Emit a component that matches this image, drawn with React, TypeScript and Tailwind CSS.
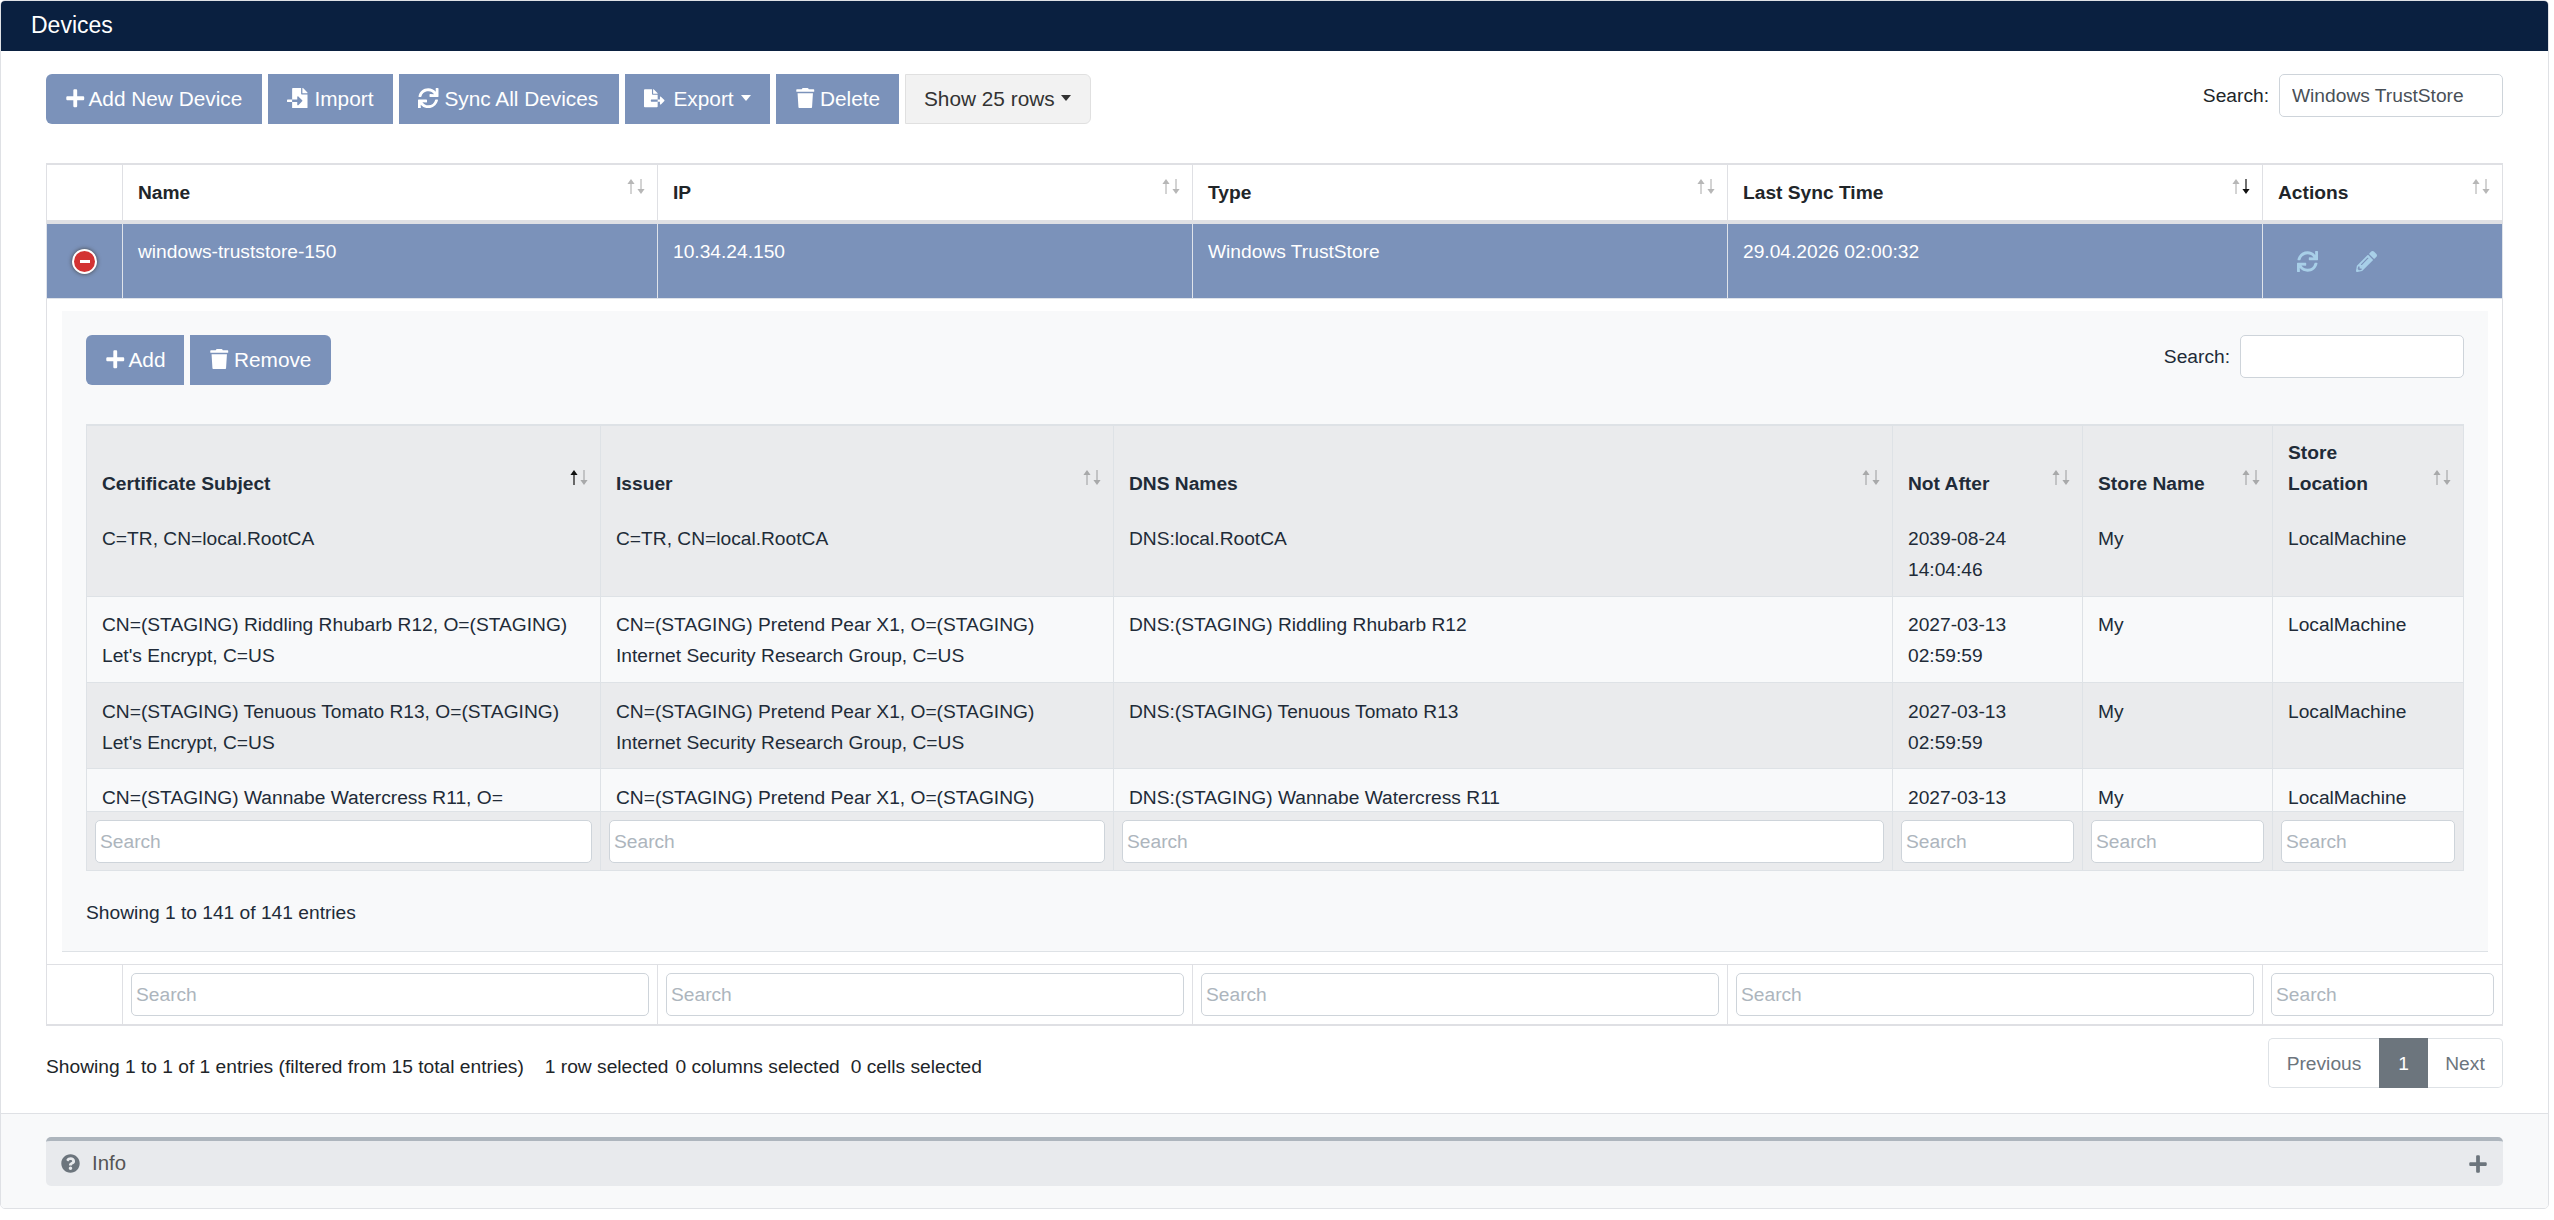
import {
  FaPlus,
  FaFileImport,
  FaFileExport,
  FaSync,
  FaTrash,
  FaPencilAlt,
  FaQuestionCircle,
} from 'react-icons/fa';

const outerCols = ['w-[77px]', 'w-[535px]', 'w-[535px]', 'w-[535px]', 'w-[535px]', 'w-[240px]'];
const innerCols = ['w-[515px]', 'w-[513px]', 'w-[779px]', 'w-[190px]', 'w-[190px]', 'w-[191px]'];

const certificates = [
  {
    subject: 'C=TR, CN=local.RootCA',
    issuer: 'C=TR, CN=local.RootCA',
    dns: 'DNS:local.RootCA',
    notAfter: '2039-08-24 14:04:46',
  },
  {
    subject: "CN=(STAGING) Riddling Rhubarb R12, O=(STAGING) Let's Encrypt, C=US",
    issuer: 'CN=(STAGING) Pretend Pear X1, O=(STAGING) Internet Security Research Group, C=US',
    dns: 'DNS:(STAGING) Riddling Rhubarb R12',
    notAfter: '2027-03-13 02:59:59',
  },
  {
    subject: "CN=(STAGING) Tenuous Tomato R13, O=(STAGING) Let's Encrypt, C=US",
    issuer: 'CN=(STAGING) Pretend Pear X1, O=(STAGING) Internet Security Research Group, C=US',
    dns: 'DNS:(STAGING) Tenuous Tomato R13',
    notAfter: '2027-03-13 02:59:59',
  },
  {
    subject: "CN=(STAGING) Wannabe Watercress R11, O=(STAGING) Let's Encrypt, C=US",
    issuer: 'CN=(STAGING) Pretend Pear X1, O=(STAGING) Internet Security Research Group, C=US',
    dns: 'DNS:(STAGING) Wannabe Watercress R11',
    notAfter: '2027-03-13 02:59:59',
  },
];

const Cols = ({ widths }: { widths: string[] }) => (
  <colgroup>
    {widths.map((w, i) => (
      <col key={i} className={w} />
    ))}
  </colgroup>
);

const SortArrow = ({ down, on }: { down?: boolean; on?: boolean }) => (
  <svg
    viewBox="0 0 8 15"
    className={`h-[15px] w-[8px] ${down ? 'rotate-180' : ''} ${on ? 'text-[#111]' : 'text-[#111]/30'}`}
    fill="currentColor"
  >
    <path d="M4 0 L7.6 5 H4.6 V15 H3.4 V5 H0.4 Z" />
  </svg>
);

// sort arrows sit on top of the header cell, like the DataTables ::before/::after ones
const SortIcon = ({ active, top }: { active?: 'up' | 'down'; top: string }) => (
  <span className={`absolute right-[12px] flex gap-[2px] ${top}`}>
    <SortArrow on={active === 'up'} />
    <SortArrow down on={active === 'down'} />
  </span>
);

const Caret = ({ className = '' }: { className?: string }) => (
  <span className={`border-x-[5.5px] border-t-[6px] border-x-transparent border-t-current ${className}`} />
);

const ToolButton = ({
  icon,
  label,
  className = '',
  caret,
}: {
  icon: React.ReactNode;
  label: string;
  className?: string;
  caret?: boolean;
}) => (
  <button
    className={`flex h-[50px] items-center bg-[#7b92ba] pb-[2px] pl-[19px] text-[20.8px] text-white ${className}`}
  >
    {icon}
    {label}
    {caret && <Caret className="-ml-[2px]" />}
  </button>
);

const SearchBox = ({ value }: { value?: string }) => (
  <div className="flex items-start gap-[10px] text-[19.2px] leading-[31px]">
    <span className="mt-[6px]">Search:</span>
    <input
      readOnly
      value={value ?? ''}
      className="h-[43px] w-[224px] rounded-[5px] border border-[#ced4da] bg-white px-[12px] pt-[1px] text-[19.2px] text-[#495057]"
    />
  </div>
);

const FilterInput = ({ className = '' }: { className?: string }) => (
  <input
    readOnly
    placeholder="Search"
    className={`block h-[43px] w-full rounded-[5px] border border-[#ced4da] bg-white px-[4px] pt-[1px] text-[19.2px] placeholder:text-[#adb5bd] ${className}`}
  />
);

const DetailPanel = () => (
  <div className="h-[641px] border-b border-[#dee2e6] bg-[#f8f9fa] px-[24px] pt-[24px] text-[#212b38]">
    <div className="flex items-start justify-between">
      <div className="flex gap-[6px]">
        <ToolButton
          icon={<FaPlus className="text-[20.5px]" />}
          label="Add"
          className="w-[98px] gap-[3px] rounded-l-[6px]"
        />
        <ToolButton
          icon={<FaTrash className="text-[20.5px]" />}
          label="Remove"
          className="w-[141px] gap-[4.5px] rounded-r-[6px]"
        />
      </div>
      <SearchBox />
    </div>

    <div className="mt-[39px] w-[2378px]">
      {/* Scroll head */}
      <table className="w-[2378px] table-fixed border-separate border-spacing-0">
        <Cols widths={innerCols} />
        <thead>
          <tr className="bg-[#eaebed] align-bottom">
            {['Certificate Subject', 'Issuer', 'DNS Names', 'Not After', 'Store Name', 'Store Location'].map(
              (title, i) => (
                <th
                  key={title}
                  className={`relative h-[87px] border-t-[2px] border-r border-[#dee2e6] px-[15px] pb-[12px] text-left font-bold ${
                    i === 0 ? 'border-l' : ''
                  } ${i === 5 ? 'pr-[48px]' : ''}`}
                >
                  {title}
                  <SortIcon active={i === 0 ? 'up' : undefined} top="top-[44px]" />
                </th>
              ),
            )}
          </tr>
        </thead>
      </table>

      {/* Scroll body */}
      <div className="h-[300px] overflow-hidden">
        <table className="w-[2378px] table-fixed border-separate border-spacing-0">
          <Cols widths={innerCols} />
          <tbody>
            {certificates.map((cert, i) => (
              <tr key={cert.dns} className={`align-top ${i % 2 === 0 ? 'bg-[#eaebed]' : 'bg-[#f8f9fa]'}`}>
                {[cert.subject, cert.issuer, cert.dns, cert.notAfter, 'My', 'LocalMachine'].map((value, j) => (
                  <td
                    key={j}
                    className={`h-[86px] border-r border-b border-[#dee2e6] px-[15px] ${i < 2 ? 'pt-[12px]' : 'pt-[13px]'} ${
                      j === 0 ? 'border-l' : ''
                    }`}
                  >
                    {value}
                  </td>
                ))}
              </tr>
            ))}
          </tbody>
        </table>
      </div>

      {/* Scroll foot */}
      <table className="w-[2378px] table-fixed border-separate border-spacing-0">
        <Cols widths={innerCols} />
        <tfoot>
          <tr className="bg-[#eaebed]">
            {innerCols.map((_, i) => (
              <td
                key={i}
                className={`h-[60px] border-t border-r border-b border-[#dee2e6] px-[8px] ${i === 0 ? 'border-l' : ''}`}
              >
                <FilterInput />
              </td>
            ))}
          </tr>
        </tfoot>
      </table>
    </div>

    <div className="mt-[26px]">Showing 1 to 141 of 141 entries</div>
  </div>
);

export default function App() {
  return (
    <div className="h-[1220px] w-[2554px] bg-white pr-[5px] font-['Liberation_Sans',Arial,sans-serif] text-[19.2px] leading-[31px] text-[#212529]">
      <div className="h-[1209px] overflow-hidden rounded-[5px] border border-[#dfe1e5]">
        <div className="flex h-[50px] items-center bg-[#0a2040] pb-[2px] pl-[30px] text-[23px] text-white">Devices</div>

        <div className="h-[1062px] px-[45px] pt-[23px]">
          {/* Toolbar */}
          <div className="flex items-start justify-between">
            <div className="flex gap-[6px]">
              <ToolButton
                icon={<FaPlus className="text-[20.5px]" />}
                label="Add New Device"
                className="w-[216px] gap-[3px] rounded-l-[6px]"
              />
              <ToolButton
                icon={<FaFileImport className="text-[20.5px]" />}
                label="Import"
                className="w-[125px] gap-[7px]"
              />
              <ToolButton
                icon={<FaSync className="text-[20.5px]" />}
                label="Sync All Devices"
                className="w-[220px] gap-[6px]"
              />
              <ToolButton
                icon={<FaFileExport className="text-[20.5px]" />}
                label="Export"
                caret
                className="w-[145px] gap-[9px]"
              />
              <ToolButton
                icon={<FaTrash className="text-[20.5px]" />}
                label="Delete"
                className="w-[123px] gap-[4.5px]"
              />
              <button className="flex h-[50px] w-[186px] items-center rounded-r-[6px] border border-[#e0e0e0] bg-[#f2f2f2] pb-[2px] pl-[18px] text-[20.8px] text-[#333]">
                Show 25 rows
                <Caret className="ml-[6px]" />
              </button>
            </div>
            <SearchBox value="Windows TrustStore" />
          </div>

          {/* Devices table */}
          <table className="mt-[39px] w-[2457px] table-fixed border-separate border-spacing-0">
            <Cols widths={outerCols} />
            <thead>
              <tr>
                {['', 'Name', 'IP', 'Type', 'Last Sync Time', 'Actions'].map((title, i) => (
                  <th
                    key={i}
                    className={`relative h-[61px] border-t-[2px] border-r border-b-[4px] border-[#dfe0e4] px-[15px] text-left font-bold ${
                      i === 0 ? 'border-l' : ''
                    }`}
                  >
                    {title}
                    {i > 0 && <SortIcon active={i === 4 ? 'down' : undefined} top="top-[14px]" />}
                  </th>
                ))}
              </tr>
            </thead>
            <tbody>
              <tr className="bg-[#7b92ba] text-white">
                <td className="h-[75px] border-r border-b border-l border-[#dfe3ea] align-middle">
                  <span className="mx-auto flex size-[25px] items-center justify-center rounded-full border-2 border-white bg-[#d33333] shadow-[0_0_4px_#444]">
                    <span className="h-[3px] w-[10px] bg-white" />
                  </span>
                </td>
                {['windows-truststore-150', '10.34.24.150', 'Windows TrustStore', '29.04.2026 02:00:32'].map((value) => (
                  <td key={value} className="border-r border-b border-[#dfe3ea] px-[15px] pb-[27px] pt-[12px] align-top">
                    {value}
                  </td>
                ))}
                <td className="border-r border-b border-[#dfe3ea] pl-[34px] align-middle text-[#a8cfe8]">
                  <div className="flex items-center gap-[38px]">
                    <FaSync className="text-[21px]" />
                    <FaPencilAlt className="text-[21px]" />
                  </div>
                </td>
              </tr>
              <tr>
                <td
                  colSpan={6}
                  className="border-r border-b border-l border-[#dfe0e4] pt-[12px] pr-[14px] pb-[12px] pl-[15px]"
                >
                  <DetailPanel />
                </td>
              </tr>
            </tbody>
            <tfoot>
              <tr>
                {outerCols.map((_, i) => (
                  <td
                    key={i}
                    className={`h-[61px] border-r border-b-[2px] border-[#dfe0e4] px-[8px] ${i === 0 ? 'border-l' : ''}`}
                  >
                    {i > 0 && <FilterInput />}
                  </td>
                ))}
              </tr>
            </tfoot>
          </table>

          {/* Table footer */}
          <div className="mt-[12px] flex items-start justify-between">
            <div className="mt-[13px] flex">
              <span>Showing 1 to 1 of 1 entries (filtered from 15 total entries)</span>
              <span className="ml-[21px]">1 row selected</span>
              <span className="ml-[7px]">0 columns selected</span>
              <span className="ml-[11px]">0 cells selected</span>
            </div>
            <div className="flex h-[50px] items-stretch text-[19.2px] text-[#6c757d]">
              <span className="flex w-[111px] items-center justify-center rounded-l-[5px] border border-r-0 border-[#dee2e6]">
                Previous
              </span>
              <span className="flex w-[49px] items-center justify-center bg-[#6c757d] text-white">1</span>
              <span className="flex w-[75px] items-center justify-center rounded-r-[5px] border border-l-0 border-[#dee2e6]">
                Next
              </span>
            </div>
          </div>
        </div>

        {/* Card footer */}
        <div className="h-[96px] border-t border-[#dfe1e5] bg-[#f8f9fa] px-[45px] pt-[23px]">
          <div className="flex h-[49px] items-center justify-between rounded-[5px] border-t-[4px] border-[#adb5bd] bg-[#e8eaed] px-[15px] text-[20.4px] text-[#555]">
            <div className="flex items-center gap-[12px]">
              <FaQuestionCircle className="text-[19px] text-[#6c757d]" />
              Info
            </div>
            <FaPlus className="text-[20px] text-[#6c757d]" />
          </div>
        </div>
      </div>
    </div>
  );
}
